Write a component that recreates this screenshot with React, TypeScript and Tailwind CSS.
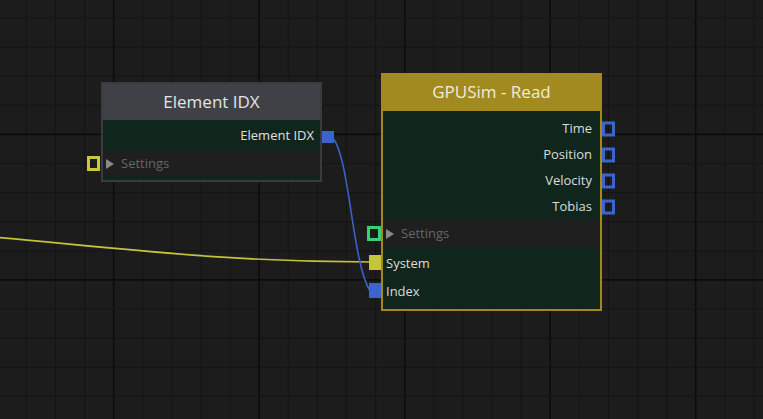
import React from "react";

const STEP = 29.1;
const X0 = 113.7 - STEP * 4;
const Y0 = 134.4 - STEP * 4;

function Grid() {
  const xs: number[] = [];
  const ys: number[] = [];
  for (let i = 0; X0 + i * STEP < 763; i++) xs.push(X0 + i * STEP);
  for (let i = 0; Y0 + i * STEP < 419; i++) ys.push(Y0 + i * STEP);
  return (
    <svg className="absolute inset-0" width={763} height={419}>
      {xs.map((x, i) => (
        <line key={"x" + i} x1={x} y1={0} x2={x} y2={419} stroke={i % 5 === 4 ? "#0c0c0c" : "#141414"} strokeWidth={i % 5 === 4 ? 1.6 : 1} />
      ))}
      {ys.map((y, i) => (
        <line key={"y" + i} x1={0} y1={y} x2={763} y2={y} stroke={i % 5 === 4 ? "#0c0c0c" : "#141414"} strokeWidth={i % 5 === 4 ? 1.6 : 1} />
      ))}
    </svg>
  );
}

function Wires() {
  return (
    <svg className="absolute inset-0" width={763} height={419}>
      <path d="M -40 234 C 120 248, 220 262, 370 262" fill="none" stroke="#c4c43a" strokeWidth={1.6} />
      <path d="M 333 138 C 350 160, 352 262, 370 291" fill="none" stroke="#3a62c8" strokeWidth={1.6} />
    </svg>
  );
}

function Tri() {
  return (
    <svg width="8" height="10" viewBox="0 0 8 10" className="shrink-0">
      <path d="M0 0 L8 5 L0 10 Z" fill="#8a8a8a" />
    </svg>
  );
}

function OutPort() {
  return <span className="absolute right-[-15px] top-1/2 h-[15px] w-[13px] -translate-y-1/2 border-[3px] border-[#3b64cc]" />;
}

function OutputRow({ label }: { label: string }) {
  return (
    <div className="relative flex h-[26px] items-center justify-end pr-[8px] text-[13px] text-[#dcdcdc]">
      {label}
      <OutPort />
    </div>
  );
}

export default function App() {
  return (
    <div className="relative h-[419px] w-[763px] overflow-hidden bg-[#1c1c1c]" style={{ fontFamily: '"Open Sans", "Noto Sans", sans-serif' }}>
      <Grid />
      <Wires />

      {/* Element IDX node */}
      <div className="absolute left-[101px] top-[82px] w-[221px] border-2 border-[#393b3f] bg-[#10261c]">
        <div className="flex h-[36px] items-center justify-center bg-[#404146] text-[17px] text-[#e4e4e4]">Element IDX</div>
        <div className="relative flex h-[31px] items-center justify-end pr-[6px] text-[13px] text-[#e0e0e0]">
          Element IDX
          <span className="absolute right-[-14px] top-[11px] h-[12px] w-[12px] bg-[#3b64cc]" />
        </div>
        <div className="relative flex h-[25px] items-center gap-[7px] bg-[#1f1f1f] pl-[3px] text-[13px] text-[#666]">
          <Tri />
          Settings
          <span className="absolute left-[-16px] top-[5px] h-[15px] w-[13px] border-[3px] border-[#c8c83a]" />
        </div>
        <div className="h-[4px]" />
      </div>

      {/* GPUSim - Read node */}
      <div className="absolute left-[381px] top-[73px] w-[221px] border-2 border-[#a08a1e] bg-[#10261c]">
        <div className="-mx-[2px] -mt-[2px] flex h-[38px] items-center justify-center bg-[#a38a20] text-[17px] text-[#f0ecd8]">GPUSim - Read</div>
        <div className="pt-[5px]">
          <OutputRow label="Time" />
          <OutputRow label="Position" />
          <OutputRow label="Velocity" />
          <OutputRow label="Tobias" />
        </div>
        <div className="relative flex h-[27px] items-center gap-[7px] bg-[#1f1f1f] pl-[3px] text-[13px] text-[#666]">
          <Tri />
          Settings
          <span className="absolute left-[-16px] top-[6px] h-[15px] w-[14px] border-[3px] border-[#3ccf72]" />
        </div>
        <div className="relative flex h-[32px] items-center pl-[3px] pt-[2px] text-[13px] text-[#dcdcdc]">
          System
          <span className="absolute left-[-14px] top-[8px] h-[15px] w-[12px] bg-[#c4c63a]" />
        </div>
        <div className="relative flex h-[26px] items-center pl-[3px] text-[13px] text-[#dcdcdc]">
          Index
          <span className="absolute left-[-14px] top-[4px] h-[15px] w-[12px] bg-[#3b64cc]" />
        </div>
        <div className="h-[4px]" />
      </div>
    </div>
  );
}
